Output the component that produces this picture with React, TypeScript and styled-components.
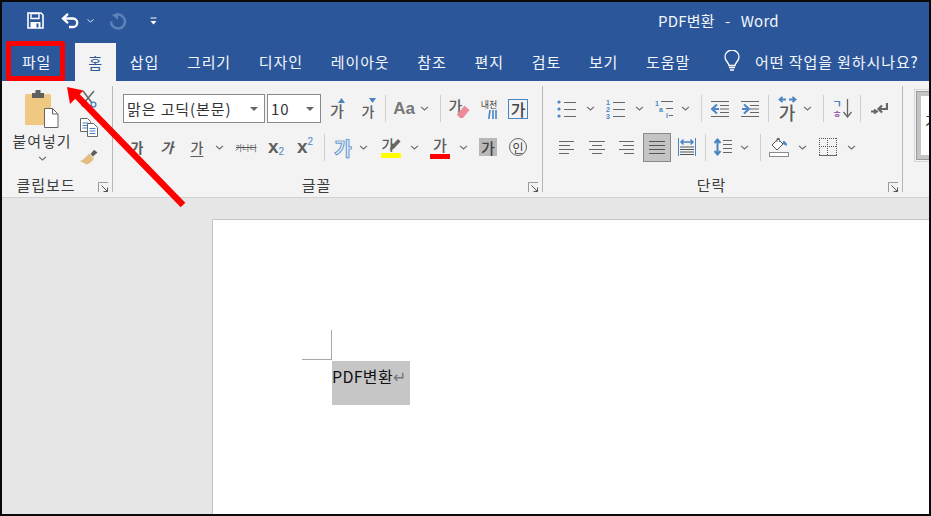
import styled, { createGlobalStyle } from 'styled-components'

const BLUE = '#2b579a'
const RIBBON = '#f3f3f3'
const GREY = '#666666'
const ICON_BLUE = '#4a84c4'

const GlobalStyle = createGlobalStyle`
  html, body {
    margin: 0;
    padding: 0;
    overflow: hidden;
    background: #e6e6e6;
  }
  * {
    box-sizing: border-box;
  }
`

function Chevron() {
  return (
    <svg width="9" height="5" viewBox="0 0 9 5">
      <path d="M1 .8 4.5 4 8 .8" fill="none" stroke="#6a6a6a" strokeWidth="1.1" />
    </svg>
  )
}

function Launcher() {
  return (
    <LauncherBox>
      <svg width="11" height="11" viewBox="0 0 11 11">
        <path d="M.5 10V.5H10" fill="none" stroke="#9a9a9a" />
        <path d="M3.5 3.5 9.5 9.5M9.5 5.5v4h-4" fill="none" stroke="#555" />
      </svg>
    </LauncherBox>
  )
}

function SaveIcon() {
  return (
    <svg width="17" height="17" viewBox="0 0 17 17">
      <path d="M1 1h13l2 2v13H1z" fill="none" stroke="#fff" strokeWidth="1.6" />
      <path d="M4 1.5h8v5H4z" fill="none" stroke="#fff" strokeWidth="1.4" />
      <path d="M3.5 10h10v6h-10z" fill="#fff" />
      <path d="M9.5 11.5h2v4h-2z" fill={BLUE} />
    </svg>
  )
}

function UndoIcon() {
  return (
    <svg width="19" height="16" viewBox="0 0 19 16">
      <path d="M2.5 5.5H12a4.2 4.2 0 0 1 0 8.5H8" fill="none" stroke="#fff" strokeWidth="2.3" />
      <path d="M7 .8 2 5.5l5 4.7" fill="none" stroke="#fff" strokeWidth="2.3" />
    </svg>
  )
}

function RedoIcon() {
  return (
    <svg width="18" height="18" viewBox="0 0 18 18">
      <path d="M6.5 3A7 7 0 1 1 2 9.500" fill="none" stroke="#5e82b8" strokeWidth="2.600" />
      <path d="M9 .8V8L3 3z" fill="#5e82b8" />
    </svg>
  )
}

function CustomizeIcon() {
  return (
    <svg width="7" height="8" viewBox="0 0 7 8">
      <path d="M.5 1h6" stroke="#fff" />
      <path d="M.5 4h6L3.500 7.500z" fill="#fff" />
    </svg>
  )
}

function BulbIcon() {
  return (
    <svg width="16" height="22" viewBox="0 0 16 22">
      <path
        d="M5 15.500c0-2.500-4-4.500-4-8.500a7 7 0 0 1 14 0c0 4-4 6-4 8.500z"
        fill="none"
        stroke="#fff"
        strokeWidth="1.300"
      />
      <path d="M5 17.500h6M6 20h4" stroke="#fff" strokeWidth="1.400" />
    </svg>
  )
}

function PasteIcon() {
  return (
    <svg width="36" height="40" viewBox="0 0 36 40">
      <rect x="1" y="5" width="26" height="31" rx="1.500" fill="#efc881" />
      <path d="M8 9V4h3.500V1h5v3H20v5z" fill="#5f5f5f" />
      <path d="M20.500 19.500h8l5.500 5.500v13.500H20.500z" fill="#fff" stroke="#666" />
      <path d="M28.500 19.500V25H34" fill="none" stroke="#666" />
    </svg>
  )
}

function CutIcon() {
  return (
    <svg width="16" height="18" viewBox="0 0 16 18">
      <path d="M2 1l9 12M13 1 3 13" stroke="#6b6b6b" strokeWidth="1.600" fill="none" />
      <circle cx="3" cy="14.500" r="2.200" fill="none" stroke="#7a7a7a" strokeWidth="1.200" />
      <circle cx="12.500" cy="14.500" r="2.400" fill="none" stroke={ICON_BLUE} strokeWidth="1.400" />
    </svg>
  )
}

function CopyIcon() {
  return (
    <svg width="18" height="19" viewBox="0 0 18 19">
      <path d="M.5.500h7l3 3v10H.5z" fill="#fff" stroke="#666" />
      <path d="M2.500 5h6M2.500 7.500h6M2.500 10h6" stroke={ICON_BLUE} />
      <path d="M7.500 5.500h6l4 4v9h-10z" fill="#fff" stroke="#666" />
      <path d="M9.500 10.500h6M9.500 13h6M9.500 15.500h6" stroke={ICON_BLUE} />
    </svg>
  )
}

function PainterIcon() {
  return (
    <svg width="18" height="16" viewBox="0 0 18 16">
      <path d="M10.500 5 14 .8l3.500 2.700L13 7.500z" fill="#5f5f5f" />
      <path d="M9 4.500 14 9.500c-1.500 2.500-4 5-7.500 6L0 12c2.500-.5 6-3.500 9-7.500z" fill="#e3bd80" />
    </svg>
  )
}

function SizeArrow({ up }: { up: boolean }) {
  return (
    <ArrowMark>
      <svg width="7" height="5" viewBox="0 0 7 5">
        <path d={up ? 'M0 5 3.500 0 7 5z' : 'M0 0h7L3.500 5z'} fill={ICON_BLUE} />
      </svg>
    </ArrowMark>
  )
}

function EraserMark() {
  return (
    <EraserBox>
      <svg width="14" height="14" viewBox="0 0 14 14">
        <path d="M8.500.8 13.500 5l-6.500 8H4L.8 9.500z" fill="#ea8a9a" />
      </svg>
    </EraserBox>
  )
}

function RubyIcon() {
  return (
    <svg width="9" height="9" viewBox="0 0 9 9">
      <path d="M2 0 .8 9M5 0v9M8 0v9" stroke={ICON_BLUE} strokeWidth="1.600" />
    </svg>
  )
}

function MarkerIcon() {
  return (
    <MarkerBox>
      <svg width="12" height="13" viewBox="0 0 12 13">
        <path d="M.5 12.500 2 8.500 9 1l2.500 2.500L4.500 11z" fill="#666" />
      </svg>
    </MarkerBox>
  )
}

function ListLines({ marks }: { marks: string[] }) {
  return (
    <svg width="20" height="20" viewBox="0 0 20 20">
      {marks.map((m, i) => (
        <g key={i}>
          {m === '•' ? (
            <circle cx="2" cy={3 + i * 7} r="1.600" fill={ICON_BLUE} />
          ) : (
            <text x="0" y={6 + i * 7} fontSize="7" fontWeight="700" fill={ICON_BLUE} fontFamily="Liberation Sans">
              {m}
            </text>
          )}
          <path d={`M7 ${3.5 + i * 7}h12`} stroke={GREY} />
        </g>
      ))}
    </svg>
  )
}

function MultiList() {
  return (
    <svg width="20" height="18" viewBox="0 0 20 18">
      <text x="0" y="6" fontSize="7" fontWeight="700" fill={ICON_BLUE} fontFamily="Liberation Sans">1</text>
      <path d="M6 1.500h12" stroke={GREY} />
      <text x="4" y="12" fontSize="7" fontWeight="700" fill={ICON_BLUE} fontFamily="Liberation Sans">a</text>
      <path d="M11 8.500h7" stroke={GREY} />
      <text x="11" y="18" fontSize="7" fontWeight="700" fill={ICON_BLUE} fontFamily="Liberation Sans">i</text>
      <path d="M14 15.500h4" stroke={GREY} />
    </svg>
  )
}

function IndentIcon({ out }: { out: boolean }) {
  return (
    <svg width="19" height="16" viewBox="0 0 19 16">
      <path d="M0 .5h18M9 4.500h9M9 8h9M9 11.500h9M0 15.500h18" stroke={GREY} />
      <path
        d={out ? 'M8 8H3M6 3.500 1 8l5 4.500' : 'M1 8h5M3 3.500 8 8l-5 4.500'}
        fill="none"
        stroke={ICON_BLUE}
        strokeWidth="2"
      />
    </svg>
  )
}

function TwoWayArrow() {
  return (
    <svg width="19" height="7" viewBox="0 0 19 7">
      <path
        d="M8 3.500H2M4.500.8 1.500 3.500l3 2.700M11 3.500h6M14.500.8l3 2.700-3 2.700"
        fill="none"
        stroke={ICON_BLUE}
        strokeWidth="1.800"
      />
    </svg>
  )
}

function SortIcon() {
  return (
    <svg width="9" height="19" viewBox="0 0 9 19">
      <path d="M4.500 0v18M.5 13 4.500 18l4-5" fill="none" stroke={GREY} strokeWidth="1.300" />
    </svg>
  )
}

function PilcrowIcon() {
  return (
    <svg width="17" height="14" viewBox="0 0 17 14">
      <path d="M16 1v6H9M11 3.500 7.500 7l3.500 3.500" fill="none" stroke={GREY} strokeWidth="2.200" />
      <path d="M0 9.500h5M3 7.500l3 2-3 2" fill="none" stroke={GREY} strokeWidth="1.800" />
    </svg>
  )
}

function AlignIcon({ kind }: { kind: 'left' | 'center' | 'right' | 'justify' }) {
  const lines: Record<string, string> = {
    left: 'M0 .5h15M0 4.500h11M0 8.500h15M0 12.500h10',
    center: 'M0 .5h16M3 4.500h10M0 8.500h16M3 12.500h10',
    right: 'M0 .5h15M4 4.500h11M0 8.500h15M5 12.500h10',
    justify: 'M0 .5h16M0 4.500h16M0 8.500h16M0 12.500h16',
  }
  return (
    <svg width="16" height="13" viewBox="0 0 16 13">
      <path d={lines[kind]} stroke={kind === 'justify' ? '#555' : GREY} />
    </svg>
  )
}

function DistributeIcon() {
  return (
    <svg width="18" height="18" viewBox="0 0 18 18">
      <path d="M.5 0v18M17.500 0v18" stroke={ICON_BLUE} />
      <path
        d="M3.500 4H14.500M5.500 1.500 3 4l2.500 2.500M12.500 1.500 15 4l-2.500 2.500"
        fill="none"
        stroke={ICON_BLUE}
        strokeWidth="1.500"
      />
      <path d="M2 9h14M2 11.500h14M2 14h14M2 16.500h14" stroke="#555" />
    </svg>
  )
}

function SpacingIcon() {
  return (
    <svg width="18" height="18" viewBox="0 0 18 18">
      <path d="M3.500 2v14M.5 5 3.500 1.500l3 3.500M.5 13l3 3.500 3-3.500" fill="none" stroke={ICON_BLUE} strokeWidth="2" />
      <path d="M9 2.500h9M9 6.500h9M9 10.500h9M9 14.500h9" stroke={GREY} />
    </svg>
  )
}

function FillIcon() {
  return (
    <svg width="20" height="20" viewBox="0 0 20 20">
      <path d="M9 2 3 8l5 5 6-6z" fill="#fff" stroke="#555" />
      <path d="M8 5V1.500h2.500V5" fill="none" stroke="#777" />
      <path d="M14 4c2 0 4 1.500 4 5l-4-2z" fill={ICON_BLUE} />
      <rect x=".5" y="15.500" width="19" height="4" fill="#fff" stroke="#8a8a8a" />
    </svg>
  )
}

function BordersIcon() {
  return (
    <svg width="18" height="18" viewBox="0 0 18 18">
      <path
        d="M0 .5h18M.5 0v17M17.500 0v17M8.500 0v17M0 8.500h18"
        fill="none"
        stroke="#555"
        strokeDasharray="1 1"
      />
      <path d="M0 17.500h18" stroke="#666" />
    </svg>
  )
}

function App() {
  return (
    <Screen>
      <GlobalStyle />
      <TitleBar>
        <QatButton $w={18} $ml={26}><SaveIcon /></QatButton>
        <QatButton $w={20} $ml={16}><UndoIcon /></QatButton>
        <QatButton $w={9} $ml={6}>
          <svg width="7" height="4" viewBox="0 0 7 4"><path d="M.5.500 3.500 3l3-2.500" fill="none" stroke="#dfe6f1" /></svg>
        </QatButton>
        <QatButton $w={18} $ml={14}><RedoIcon /></QatButton>
        <QatButton $w={8} $ml={22}><CustomizeIcon /></QatButton>
        <WindowTitle>PDF변환&nbsp;&nbsp;-&nbsp;&nbsp;Word</WindowTitle>
      </TitleBar>

      <TabBar>
        <Tab>파일</Tab>
        <Tab $active>홈</Tab>
        <Tab>삽입</Tab>
        <Tab>그리기</Tab>
        <Tab>디자인</Tab>
        <Tab>레이아웃</Tab>
        <Tab>참조</Tab>
        <Tab>편지</Tab>
        <Tab>검토</Tab>
        <Tab>보기</Tab>
        <Tab>도움말</Tab>
        <TellMe>
          <BulbIcon />
          <span>어떤 작업을 원하시나요?</span>
        </TellMe>
      </TabBar>

      <Ribbon>
        <Group $w={111}>
          <ClipboardBody>
            <PasteButton>
              <PasteIcon />
              <PasteLabel>붙여넣기</PasteLabel>
              <Chevron />
            </PasteButton>
            <SmallTools>
              <SmallTool><CutIcon /></SmallTool>
              <SmallTool><CopyIcon /></SmallTool>
              <SmallTool><PainterIcon /></SmallTool>
            </SmallTools>
          </ClipboardBody>
          <GroupFooter>
            <GroupLabel>클립보드</GroupLabel>
            <Launcher />
          </GroupFooter>
        </Group>

        <Group $w={430}>
          <ToolRows>
            <ToolRow>
              <FontSelect $w={142}>
                <span>맑은 고딕(본문)</span>
                <DropMark />
              </FontSelect>
              <FontSelect $w={54} $ml={2}>
                <span>10</span>
                <DropMark />
              </FontSelect>
              <Tool $w={24} $ml={4}><SizedGa $size={15}>가</SizedGa><SizeArrow up /></Tool>
              <Tool $w={24} $ml={7}><SizedGa $size={14}>가</SizedGa><SizeArrow up={false} /></Tool>
              <ToolSep $ml={5} />
              <Tool $w={24} $ml={6}><AaText>Aa</AaText></Tool>
              <Tool $w={10} $ml={3}><Chevron /></Tool>
              <ToolSep $ml={11} />
              <Tool $w={24} $ml={6}><EraserGa $size={15}>가</EraserGa><EraserMark /></Tool>
              <Tool $w={24} $ml={6}>
                <RubyStack>
                  <RubyText>내천</RubyText>
                  <RubyIcon />
                </RubyStack>
              </Tool>
              <Tool $w={20} $ml={7}><BoxedGa>가</BoxedGa></Tool>
            </ToolRow>
            <ToolRow>
              <Tool $w={24} $ml={2}><Ga $size={14} $bold>가</Ga></Tool>
              <Tool $w={24} $ml={6}><Ga $size={14} $bold $italic>가</Ga></Tool>
              <Tool $w={24} $ml={6}><Ga $size={14} $under>가</Ga></Tool>
              <Tool $w={10} $ml={5}><Chevron /></Tool>
              <Tool $w={22} $ml={11}>
                <StrikeText>가나다</StrikeText>
                <StrikeBar />
              </Tool>
              <Tool $w={20} $ml={9}><Script>x<SubMark>2</SubMark></Script></Tool>
              <Tool $w={20} $ml={9}><Script>x<SupMark>2</SupMark></Script></Tool>
              <ToolSep $ml={9} />
              <Tool $w={24} $ml={6}><GlowGa>가</GlowGa></Tool>
              <Tool $w={10} $ml={3}><Chevron /></Tool>
              <Tool $w={22} $ml={12}>
                <ColourStack>
                  <HighlightGa $size={14}>가</HighlightGa>
                  <MarkerIcon />
                  <ColourBar $color="#ffff00" />
                </ColourStack>
              </Tool>
              <Tool $w={10} $ml={7}><Chevron /></Tool>
              <Tool $w={22} $ml={10}>
                <ColourStack>
                  <Ga $size={15}>가</Ga>
                  <ColourBar $color="#ff0000" />
                </ColourStack>
              </Tool>
              <Tool $w={10} $ml={7}><Chevron /></Tool>
              <Tool $w={18} $ml={11}><ShadedGa>가</ShadedGa></Tool>
              <Tool $w={20} $ml={11}><CircledChar>인</CircledChar></Tool>
            </ToolRow>
          </ToolRows>
          <GroupFooter>
            <GroupLabel>글꼴</GroupLabel>
            <Launcher />
          </GroupFooter>
        </Group>

        <Group $w={360}>
          <ToolRows>
            <ToolRow>
              <Tool $w={20} $ml={4}><ListLines marks={['•', '•', '•']} /></Tool>
              <Tool $w={10} $ml={8}><Chevron /></Tool>
              <Tool $w={20} $ml={11}><ListLines marks={['1', '2', '3']} /></Tool>
              <Tool $w={10} $ml={8}><Chevron /></Tool>
              <Tool $w={20} $ml={11}><MultiList /></Tool>
              <Tool $w={10} $ml={5}><Chevron /></Tool>
              <ToolSep $ml={11} />
              <Tool $w={20} $ml={8}><IndentIcon out /></Tool>
              <Tool $w={20} $ml={10}><IndentIcon out={false} /></Tool>
              <ToolSep $ml={8} />
              <Tool $w={20} $ml={8}>
                <DirectionStack>
                  <TwoWayArrow />
                  <DirectionGa $size={18}>가</DirectionGa>
                </DirectionStack>
              </Tool>
              <Tool $w={10} $ml={5}><Chevron /></Tool>
              <ToolSep $ml={11} />
              <Tool $w={20} $ml={8}>
                <SortStack>
                  <SortLetters>
                    <SortLetter $color={ICON_BLUE}>ㄱ</SortLetter>
                    <SortLetter $color="#9a5fb4">ㅎ</SortLetter>
                  </SortLetters>
                  <SortIcon />
                </SortStack>
              </Tool>
              <ToolSep $ml={8} />
              <Tool $w={20} $ml={8}><PilcrowIcon /></Tool>
            </ToolRow>
            <ToolRow>
              <Tool $w={20} $ml={4}><AlignIcon kind="left" /></Tool>
              <Tool $w={20} $ml={10}><AlignIcon kind="center" /></Tool>
              <Tool $w={20} $ml={10}><AlignIcon kind="right" /></Tool>
              <Tool $w={28} $ml={6} $pressed><AlignIcon kind="justify" /></Tool>
              <Tool $w={20} $ml={6}><DistributeIcon /></Tool>
              <ToolSep $ml={8} />
              <Tool $w={20} $ml={7}><SpacingIcon /></Tool>
              <Tool $w={10} $ml={6}><Chevron /></Tool>
              <ToolSep $ml={11} />
              <Tool $w={22} $ml={7}><FillIcon /></Tool>
              <Tool $w={10} $ml={7}><Chevron /></Tool>
              <Tool $w={20} $ml={11}><BordersIcon /></Tool>
              <Tool $w={10} $ml={8}><Chevron /></Tool>
            </ToolRow>
          </ToolRows>
          <GroupFooter>
            <GroupLabel>단락</GroupLabel>
            <Launcher />
          </GroupFooter>
        </Group>

        <StyleGallery>
          <StylePreview>
            <StyleSample>가</StyleSample>
          </StylePreview>
        </StyleGallery>
      </Ribbon>

      <DocArea>
        <Page>
          <CropMark />
          <Selection>
            PDF변환<ReturnMark>↵</ReturnMark>
          </Selection>
        </Page>
      </DocArea>

      <RedBox />
      <ArrowOverlay width="931" height="516" viewBox="0 0 931 516">
        <path d="M183 205 75 94" stroke="#ff0000" strokeWidth="6.500" fill="none" />
        <path d="M67 87 83.500 90.500 70 104z" fill="#ff0000" />
      </ArrowOverlay>
    </Screen>
  )
}

const KR = `"Noto Sans CJK KR", "Noto Sans", sans-serif`

const Screen = styled.div`
  position: relative;
  width: 931px;
  height: 516px;
  display: flex;
  flex-direction: column;
  overflow: hidden;
  background: #e6e6e6;
  font-family: ${KR};
  &::after {
    content: '';
    position: absolute;
    inset: 0;
    border: 2px solid #0a0a0a;
    pointer-events: none;
  }
`

const TitleBar = styled.header`
  height: 41px;
  flex: none;
  display: flex;
  align-items: center;
  background: ${BLUE};
  color: #fff;
`

const QatButton = styled.div<{ $w: number; $ml: number }>`
  width: ${(p) => p.$w}px;
  margin-left: ${(p) => p.$ml}px;
  display: flex;
  align-items: center;
  justify-content: center;
`

const WindowTitle = styled.div`
  margin-left: 501px;
  font-size: 15px;
  letter-spacing: 0.2px;
  word-spacing: 1.6px;
  color: #f2f5fa;
  white-space: nowrap;
`

const TabBar = styled.nav`
  height: 40px;
  flex: none;
  display: flex;
  align-items: flex-end;
  padding-left: 8px;
  background: ${BLUE};
`

const Tab = styled.div<{ $active?: boolean }>`
  height: ${(p) => (p.$active ? 38 : 40)}px;
  padding: ${(p) => (p.$active ? '0 13px' : '0 13.9px')};
  margin-left: ${(p) => (p.$active ? '10px' : '0')};
  display: flex;
  align-items: center;
  font-size: 15px;
  letter-spacing: 0.9px;
  white-space: nowrap;
  color: ${(p) => (p.$active ? BLUE : '#f4f6fa')};
  background: ${(p) => (p.$active ? RIBBON : 'transparent')};
`

const TellMe = styled.div`
  display: flex;
  align-items: center;
  gap: 15px;
  height: 40px;
  margin-left: 20px;
  color: #f4f6fa;
  font-size: 15px;
  letter-spacing: 0.9px;
  white-space: nowrap;
`

const Ribbon = styled.section`
  height: 117px;
  flex: none;
  display: flex;
  padding: 5px 0 5px 2px;
  background: ${RIBBON};
  border-bottom: 1px solid #d2d2d2;
`

const Group = styled.div<{ $w: number }>`
  width: ${(p) => p.$w}px;
  height: 106px;
  flex: none;
  display: flex;
  flex-direction: column;
  border-right: 1px solid #b8b8b8;
`

const GroupFooter = styled.div`
  margin-top: auto;
  display: flex;
  align-items: center;
  height: 14px;
`

const GroupLabel = styled.div`
  flex: 1;
  text-align: center;
  font-size: 15px;
  letter-spacing: 0.9px;
  line-height: 14px;
  color: #3c3c3c;
  white-space: nowrap;
`

const LauncherBox = styled.div`
  width: 22px;
  margin-top: 4px;
  padding-right: 3px;
  display: flex;
  justify-content: flex-end;
`

const ClipboardBody = styled.div`
  display: flex;
  padding-top: 3px;
`

const PasteButton = styled.div`
  width: 72px;
  margin-left: 4px;
  display: flex;
  flex-direction: column;
  align-items: center;
`

const PasteLabel = styled.div`
  margin: 3px 0 6px;
  font-size: 15px;
  letter-spacing: 0.9px;
  line-height: 18px;
  color: #3c3c3c;
  white-space: nowrap;
`

const SmallTools = styled.div`
  width: 22px;
  display: flex;
  flex-direction: column;
  gap: 10px;
`

const SmallTool = styled.div`
  height: 19px;
  display: flex;
  align-items: center;
  justify-content: center;
`

const ToolRows = styled.div`
  display: flex;
  flex-direction: column;
  gap: 9px;
  padding: 8px 0 0 10px;
`

const ToolRow = styled.div`
  height: 29.500px;
  display: flex;
  align-items: center;
`

const Tool = styled.div<{ $w: number; $ml?: number; $pressed?: boolean }>`
  position: relative;
  width: ${(p) => p.$w}px;
  height: 29px;
  flex: none;
  margin-left: ${(p) => p.$ml ?? 0}px;
  display: flex;
  align-items: center;
  justify-content: center;
  background: ${(p) => (p.$pressed ? '#c4c4c4' : 'transparent')};
  border: ${(p) => (p.$pressed ? '1px solid #8a8a8a' : 'none')};
`

const ToolSep = styled.div<{ $ml: number }>`
  width: 1px;
  height: 27px;
  flex: none;
  margin-left: ${(p) => p.$ml}px;
  background: #d0d0d0;
`

const FontSelect = styled.div<{ $w: number; $ml?: number }>`
  width: ${(p) => p.$w}px;
  height: 29px;
  flex: none;
  margin-left: ${(p) => p.$ml ?? 0}px;
  padding: 0 6px 0 3px;
  display: flex;
  align-items: center;
  justify-content: space-between;
  background: #fff;
  border: 1px solid #8a8a8a;
  font-size: 15px;
  letter-spacing: 0.9px;
  color: #333;
  white-space: nowrap;
`

const DropMark = styled.i`
  width: 0;
  height: 0;
  border-left: 4px solid transparent;
  border-right: 4px solid transparent;
  border-top: 4px solid #666;
`

const Ga = styled.span<{ $size: number; $bold?: boolean; $italic?: boolean; $under?: boolean }>`
  font-size: ${(p) => p.$size}px;
  line-height: 1.2;
  color: #5c5c5c;
  font-weight: ${(p) => (p.$bold ? 700 : 500)};
  font-style: ${(p) => (p.$italic ? 'italic' : 'normal')};
  text-decoration: ${(p) => (p.$under ? 'underline' : 'none')};
  text-underline-offset: 3px;
`

const SizedGa = styled(Ga)`
  margin-top: 5px;
`

const EraserGa = styled(Ga)`
  margin: -6px 7px 0 0;
`

const HighlightGa = styled(Ga)`
  margin-right: 6px;
`

const DirectionGa = styled(Ga)`
  line-height: 18px;
`

const ArrowMark = styled.span`
  position: absolute;
  top: 4px;
  right: 4px;
  display: flex;
`

const AaText = styled.span`
  font-family: 'Liberation Sans', sans-serif;
  font-size: 17px;
  font-weight: 700;
  color: #777;
`

const EraserBox = styled.span`
  position: absolute;
  right: 1px;
  bottom: 4px;
  display: flex;
`

const RubyStack = styled.div`
  display: flex;
  flex-direction: column;
  align-items: flex-end;
`

const RubyText = styled.span`
  font-size: 9px;
  line-height: 11px;
  color: #444;
  white-space: nowrap;
`

const BoxedGa = styled.div`
  width: 20px;
  height: 20px;
  display: flex;
  align-items: center;
  justify-content: center;
  border: 1px solid ${ICON_BLUE};
  font-size: 16px;
  font-weight: 500;
  color: #444;
`

const StrikeText = styled.span`
  font-size: 8px;
  color: #666;
  white-space: nowrap;
`

const StrikeBar = styled.i`
  position: absolute;
  left: 1px;
  right: 1px;
  top: 14px;
  height: 1px;
  background: #555;
`

const Script = styled.span`
  font-family: 'Liberation Sans', sans-serif;
  font-size: 19px;
  line-height: 20px;
  font-weight: 700;
  color: #5f5f5f;
  display: inline-flex;
`

const SubMark = styled.span`
  font-size: 10px;
  font-weight: 400;
  color: ${ICON_BLUE};
  align-self: flex-end;
  line-height: 10px;
`

const SupMark = styled.span`
  font-size: 10px;
  font-weight: 400;
  color: ${ICON_BLUE};
  align-self: flex-start;
  line-height: 10px;
`

const GlowGa = styled.span`
  font-size: 19px;
  font-weight: 700;
  color: #dfeaf7;
  -webkit-text-stroke: 0.7px ${ICON_BLUE};
  text-shadow: 0 0 2px #a9c8ea;
`

const ColourStack = styled.div`
  position: relative;
  width: 20px;
  display: flex;
  flex-direction: column;
  align-items: center;
`

const ColourBar = styled.i<{ $color: string }>`
  width: 20px;
  height: 5px;
  background: ${(p) => p.$color};
`

const MarkerBox = styled.span`
  position: absolute;
  top: 2px;
  right: 0;
  display: flex;
`

const ShadedGa = styled.span`
  width: 18px;
  height: 18px;
  display: flex;
  align-items: center;
  justify-content: center;
  background: #b8b8b8;
  font-size: 15px;
  font-weight: 500;
  color: #444;
`

const CircledChar = styled.span`
  width: 18px;
  height: 18px;
  display: flex;
  align-items: center;
  justify-content: center;
  border-radius: 50%;
  border: 1px solid #666;
  font-size: 12px;
  color: #444;
`

const DirectionStack = styled.div`
  display: flex;
  flex-direction: column;
  align-items: center;
`

const SortStack = styled.div`
  display: flex;
  align-items: center;
  gap: 1px;
`

const SortLetters = styled.div`
  display: flex;
  flex-direction: column;
  gap: 1px;
`

const SortLetter = styled.span<{ $color: string }>`
  font-size: 10px;
  line-height: 9px;
  font-weight: 700;
  color: ${(p) => p.$color};
`

const StyleGallery = styled.div`
  margin: 3px 0 0 11px;
  width: 40px;
  height: 73px;
  flex: none;
  padding: 1px;
  border: 1px solid #d6d6d6;
`

const StylePreview = styled.div`
  height: 100%;
  padding: 12px 0 0 4px;
  background: #fff;
  border: 5px solid #c4c4c4;
  border-right: none;
  outline: 1px solid #9a9a9a;
  outline-offset: -1px;
`

const StyleSample = styled.span`
  font-size: 15px;
  color: #333;
`

const DocArea = styled.main`
  flex: 1;
  min-height: 0;
  display: flex;
  padding: 21px 0 0 212px;
  background: #e6e6e6;
`

const Page = styled.div`
  flex: 1;
  background: #fff;
  border-left: 1px solid #c6c6c6;
  border-top: 1px solid #c6c6c6;
`

const CropMark = styled.div`
  width: 30px;
  height: 30px;
  margin: 110px 0 0 89px;
  border-right: 1px solid #a8a8a8;
  border-bottom: 1px solid #a8a8a8;
`

const Selection = styled.div`
  width: 78px;
  height: 44px;
  margin: 1px 0 0 119px;
  background: #c6c6c6;
  font-size: 16px;
  letter-spacing: 0.3px;
  line-height: 30px;
  color: #111;
  white-space: nowrap;
`

const ReturnMark = styled.span`
  font-family: 'DejaVu Sans', sans-serif;
  color: #777;
  font-size: 16px;
  line-height: 20px;
`

const RedBox = styled.div`
  position: absolute;
  left: 6px;
  top: 41px;
  width: 59px;
  height: 40px;
  border: 5px solid #ff0000;
  border-radius: 2px;
`

const ArrowOverlay = styled.svg`
  position: absolute;
  left: 0;
  top: 0;
  pointer-events: none;
`

export default App
